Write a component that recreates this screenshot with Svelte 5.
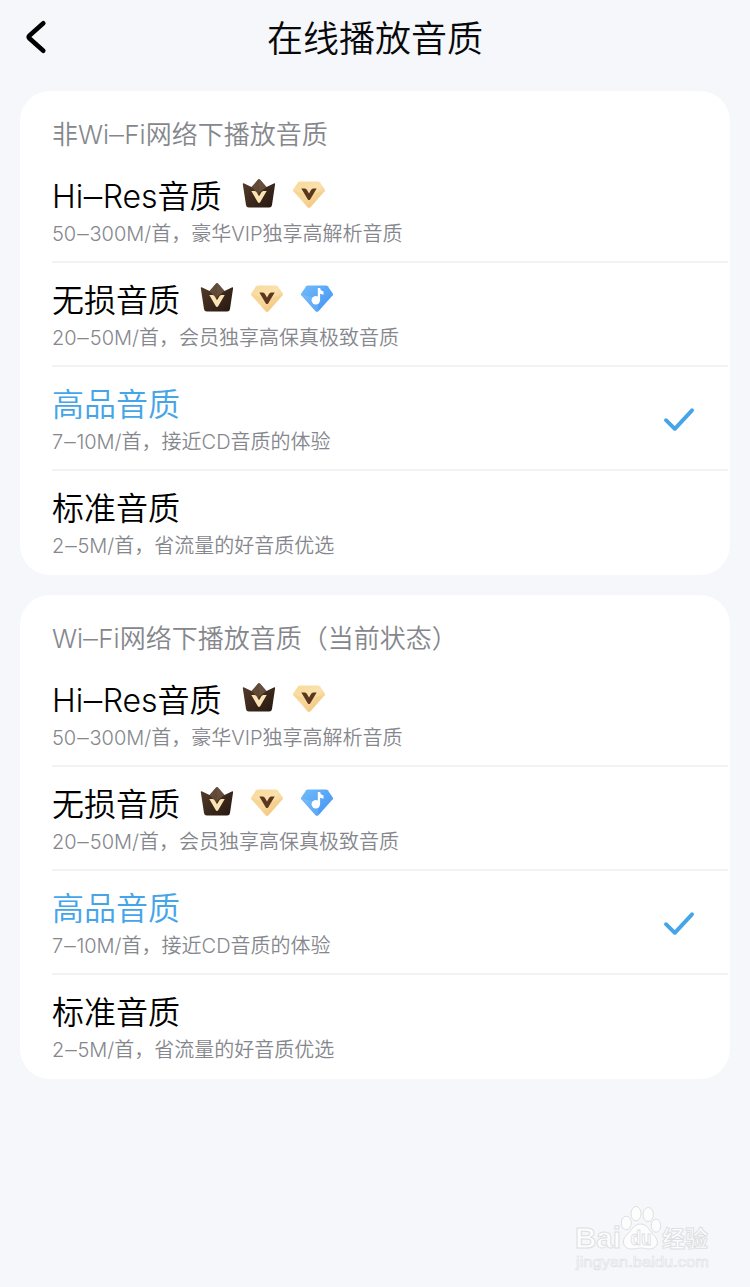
<script>
  const options = [
    { name: 'Hi–Res音质', note: '50–300M/首，豪华VIP独享高解析音质', badges: ['crown', 'gold'] },
    { name: '无损音质', note: '20–50M/首，会员独享高保真极致音质', badges: ['crown', 'gold', 'music'] },
    { name: '高品音质', note: '7–10M/首，接近CD音质的体验', badges: [], selected: true },
    { name: '标准音质', note: '2–5M/首，省流量的好音质优选', badges: [] }
  ];
  const groups = ['非Wi–Fi网络下播放音质', 'Wi–Fi网络下播放音质（当前状态）'];
</script>

{#snippet dashed(text)}{#each text.split('–') as part, i}{#if i}<span class="dash">–</span>{/if}{part}{/each}{/snippet}

<svg class="defs" width="0" height="0" aria-hidden="true">
  <defs>
    <linearGradient id="dark" x1="0" y1="0" x2="1" y2="1">
      <stop offset="0" stop-color="#553d2b" /><stop offset="1" stop-color="#251710" />
    </linearGradient>
    <linearGradient id="sand" x1="0" y1="0" x2="1" y2="1">
      <stop offset="0" stop-color="#f8d997" /><stop offset=".5" stop-color="#fae1ae" /><stop offset="1" stop-color="#efbf70" />
    </linearGradient>
    <linearGradient id="blue" x1="0" y1="0" x2="1" y2="1">
      <stop offset="0" stop-color="#72bcfa" /><stop offset="1" stop-color="#3f91f3" />
    </linearGradient>
  </defs>
</svg>

<div class="page">
  <header>
    <svg class="back" width="30" height="40" viewBox="0 0 30 40">
      <path d="M23.300 3.300 9.300 15.800q-1.300 1.200 0 2.400L23.300 30.700" fill="none" stroke="#000" stroke-width="4.600" stroke-linecap="round" stroke-linejoin="round" />
    </svg>
    <h1>在线播放音质</h1>
  </header>

  <main>
    {#each groups as title}
      <section>
        <h2>{@render dashed(title)}</h2>
        {#each options as o}
          <div class="row" class:selected={o.selected}>
            <div class="info">
              <div class="name">
                <span>{@render dashed(o.name)}</span>
                {#if o.badges.length}
                  <div class="badges">
                    {#each o.badges as b}
                      <svg width="34" height="32" viewBox="0 0 34 32">
                        {#if b === 'crown'}
                          <path d="M.8 6.200Q.6 4.600 2.200 5.500L9.500 9 16 1.600q1-1 2 0L24.500 9l7.300-3.500q1.500-.9 1.300.7L30 27q-.4 2.500-2.800 2.500H6.800Q4.400 29.500 4 27Z" fill="url(#dark)" />
                          <path d="M17 1 9.500 9 17 17Z" fill="#967b5c" opacity=".35" />
                          <path d="M17 1v14l7.500-6Z" fill="#8a7059" opacity=".5" />
                          <path d="M9.300 13h3.400q1.400 0 2.100 1.500L17 18.200l2.200-3.700q.7-1.500 2.100-1.500h3.400L18.300 24q-1.300 2-2.600 0Z" fill="#fce3b3" />
                        {:else}
                          <path d="M8 3.500h18q1.100 0 1.800.8l5 7.200q.6.9-.1 1.700L18.700 29q-1.700 1.700-3.400 0L1.300 13.200q-.7-.8-.1-1.700l5-7.200Q6.900 3.500 8 3.500Z" fill={b === 'gold' ? 'url(#sand)' : 'url(#blue)'} />
                          {#if b === 'gold'}
                            <path d="M17 17 1.500 12.500 15.300 29q1.700 1.700 3.400 0L32.500 12.500Z" fill="#efbd6c" opacity=".28" />
                            <path d="M9.300 10.500h3.500q1.500 0 2.200 1.500l2 3.500 2-3.500q.7-1.500 2.200-1.500h3.500l-6.400 10.700q-1.300 1.800-2.600 0Z" fill="#5b371f" />
                          {:else}
                            <path d="m17 16-15.500-3.500L15.300 29q1.700 1.700 3.400 0Z" fill="#fff" opacity=".1" />
                            <circle cx="15.800" cy="18.200" r="4.200" fill="#fff" />
                            <path d="M17.800 6h2.300c.2 1.900 1.200 2.900 3.400 3.400v3c-1.400 0-2.400-.4-3.400-1v7.400h-2.300Z" fill="#fff" />
                          {/if}
                        {/if}
                      </svg>
                    {/each}
                  </div>
                {/if}
              </div>
              <p>{@render dashed(o.note)}</p>
            </div>
            {#if o.selected}
              <svg class="check" width="34" height="26" viewBox="0 0 34 26">
                <path d="m4 14.200 8.800 8.600L30 4.300" fill="none" stroke="#45a5e8" stroke-width="3.900" stroke-linecap="round" stroke-linejoin="round" />
              </svg>
            {/if}
          </div>
        {/each}
      </section>
    {/each}
  </main>

  <svg class="mark" width="150" height="80" viewBox="0 0 150 80">
    <g fill="#fdfdfe" stroke="#dedfe3" stroke-width="1">
      <text x="5" y="48" class="logo" textLength="46" lengthAdjust="spacingAndGlyphs">Bai</text>
      <ellipse cx="56.300" cy="23" rx="5" ry="6.700" />
      <ellipse cx="66" cy="13.700" rx="5" ry="7.200" />
      <ellipse cx="78.200" cy="14.500" rx="5.200" ry="7" />
      <ellipse cx="86" cy="25.700" rx="4.800" ry="6.500" />
      <path d="M70.500 24c7 0 9 7 14 12 6 6 2 13-5 13-4 0-6-1-9-1s-5 1-9 1c-8 0-11-8-5-14 5-4 7-11 14-11Z" />
      <text x="60.500" y="45" class="du" textLength="21" lengthAdjust="spacingAndGlyphs">du</text>
      <text x="92" y="47" class="cn">经验</text>
      <text x="6" y="66.500" class="url" textLength="133" lengthAdjust="spacingAndGlyphs">jingyan.baidu.com</text>
    </g>
  </svg>
</div>

<style>
  :global(body) { margin: 0; background: #f5f7fb; }
  .defs { position: absolute; }
  .page {
    position: relative;
    height: 1287px;
    overflow: hidden;
    background: #f5f7fb;
    font-family: Inter, "Noto Sans CJK SC", sans-serif;
  }
  header { height: 91px; display: grid; grid-template-columns: 100px 1fr 100px; align-items: start; }
  .back { margin: 20px 0 0 20px; }
  h1 { margin: 0; padding-top: 13px; text-align: center; font-size: 36px; line-height: 52px; font-weight: 350; color: #08090b; }
  main { display: flex; flex-direction: column; gap: 20px; padding: 0 20px; }
  section { height: 484px; background: #fff; border-radius: 30px; overflow: hidden; }
  h2 { margin: 0; height: 68px; padding: 25px 32px 0; box-sizing: border-box; font-size: 26px; line-height: 38px; font-weight: 350; color: #85878d; }
  h2 .dash { margin: 0 .04em; }
  .dash { display: inline-block; margin: 0 .08em; transform: scaleX(1.15); }
  .row { height: 104px; margin: 0 2px 0 32px; box-sizing: border-box; border-bottom: 2px solid #f2f2f4; display: flex; justify-content: space-between; align-items: center; }
  .row:last-child { border-bottom: 0; }
  .info { height: 100%; padding-top: 15px; box-sizing: border-box; }
  .name { height: 45px; display: flex; align-items: center; gap: 20px; font-size: 32px; line-height: 46px; font-weight: 350; color: #000; }
  .name .dash { margin: 0 .055em; }
  .badges { display: flex; gap: 16px; margin-top: -6px; }
  p { margin: 0; font-size: 20px; line-height: 30px; font-weight: 350; color: #85878d; }
  .selected .name { color: #45a5e8; }
  .check { margin: 2px 32px 0 0; }
  .mark { position: absolute; left: 570px; top: 1200px; }
  .logo, .du, .url { font-family: "Liberation Sans", sans-serif; }
  .logo { font-size: 29px; font-weight: 700; }
  .du { font-size: 20px; font-weight: 700; }
  .cn { font-family: "Noto Sans CJK SC", sans-serif; font-size: 23px; font-weight: 700; }
  .url { font-size: 15px; stroke-width: .6; }
</style>
